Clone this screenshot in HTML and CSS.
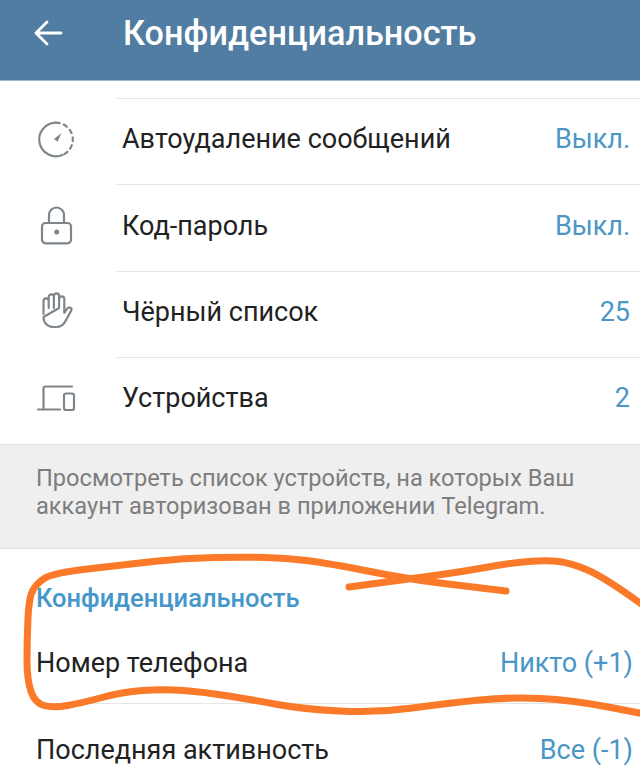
FILE: index.html
```html
<!DOCTYPE html>
<html lang="ru">
<head>
<meta charset="utf-8">
<title>Конфиденциальность</title>
<link rel="stylesheet" href="styles.css">
</head>
<body>
<div class="page">
  <header class="bar">
    <svg class="back" viewBox="0 0 30 28" width="30" height="28"><path d="M28 14H3M14 3 3 14l11 11" fill="none" stroke="#fff" stroke-width="2.800" stroke-linecap="round" stroke-linejoin="round"/></svg>
    <h1 class="title">Конфиденциальность</h1>
  </header>
  <section class="list">
    <div class="row">
      <svg class="icon" viewBox="0 0 40 40" width="40" height="40"><g fill="none" stroke="#7f868b" stroke-width="2.200" stroke-linecap="round"><path d="M19 1.700A16.800 16.800 0 1 0 25.500 34"/><path d="M19 1.700a16.800 16.800 0 0 1 16.800 16.800 16.800 16.800 0 0 1-10.300 15.500" stroke-dasharray="3.800 4.200"/></g><path d="M24.500 12 20.500 20.800 17 18Z" fill="#7f868b"/></svg>
      <div class="cell"><span class="label">Автоудаление сообщений</span><span class="value">Выкл.</span></div>
    </div>
    <div class="row">
      <svg class="icon" viewBox="0 0 40 40" width="40" height="40"><g fill="none" stroke="#7f868b" stroke-width="2.200"><rect x="5" y="15" width="29" height="20.300" rx="3.500"/><path d="M12 15V7a7.500 7.500 0 0 1 15 0v8"/></g><circle cx="19.700" cy="24" r="2.500" fill="#7f868b"/></svg>
      <div class="cell"><span class="label">Код-пароль</span><span class="value">Выкл.</span></div>
    </div>
    <div class="row">
      <svg class="icon" viewBox="0 0 40 40" width="40" height="40"><path transform="translate(-1.500 -4)" d="M8 24V11a2.600 2.600 0 0 1 5.200 0v7M13.200 18V7a2.600 2.600 0 0 1 5.200 0v11M18.400 18V6a2.600 2.600 0 0 1 5.200 0v12M23.600 18V9a2.600 2.600 0 0 1 5.200 0v14l3-4.500c1.800-2.300 5.200-.4 3.800 2.200L30 31c-2 4-5 6-9 6h-3c-6 0-10-4-10-10z" fill="none" stroke="#7f868b" stroke-width="2.200" stroke-linecap="round" stroke-linejoin="round"/></svg>
      <div class="cell"><span class="label">Чёрный список</span><span class="value">25</span></div>
    </div>
    <div class="row">
      <svg class="icon" viewBox="0 0 40 40" width="40" height="40"><g fill="none" stroke="#7f868b" stroke-width="2.200" stroke-linecap="round" stroke-linejoin="round"><path d="M35 6.500H8.500a2 2 0 0 0-2 2V29"/><path d="M1 29.500H23"/><rect x="27" y="13.500" width="10" height="16.500" rx="2"/></g></svg>
      <div class="cell"><span class="label">Устройства</span><span class="value">2</span></div>
    </div>
  </section>
  <p class="hint">Просмотреть список устройств, на которых Ваш аккаунт авторизован в приложении Telegram.</p>
  <section class="privacy">
    <h2 class="section-title">Конфиденциальность</h2>
    <div class="plain-row plain-first"><span class="label">Номер телефона</span><span class="value">Никто (+1)</span></div>
    <div class="plain-row plain-second"><span class="label">Последняя активность</span><span class="value">Все (-1)</span></div>
  </section>
  <svg class="scribble" viewBox="0 0 640 779" width="640" height="779"><g fill="none" stroke="#fb7a2a" stroke-width="7" stroke-linecap="round" stroke-linejoin="round"><path d="M646 607L640 603Q604 577 587.500 570Q571 563 559 561.500Q547 560 528.500 561.500Q510 563 485.500 567.500Q461 572 434.500 575.500Q408 579 349 587"/><path d="M506 591L440 583Q408 579 367.500 571Q327 563 306.500 560.500Q286 558 265.500 557.500Q245 557 214.500 557.500Q184 558 153 561.500Q122 565 87.500 569Q53 573 45 578Q37 583 33 590Q29 597 28 618Q27 640 27 660Q27 680 31 691.500Q35 703 44 705.500Q53 708 67.500 705.500Q82 703 102 697.500Q122 692 142.500 690.500Q163 689 183.500 690.500Q204 692 228.500 696Q253 700 277.500 704.500Q302 709 339 711Q376 713 412.500 708Q449 703 479.500 700Q510 697 540.500 698.500Q571 700 605.500 706.500Q640 713 650 715"/></g></svg>
</div>
</body>
</html>
```

FILE: styles.css
```css
* { box-sizing: border-box; margin: 0; padding: 0; }
html, body { background: #fff; }
body { font-family: Roboto, "Noto Sans", sans-serif; overflow: hidden; }
.page { position: relative; width: 640px; height: 779px; overflow: hidden; background: #fff; }
.bar { height: 81px; background: #517da2; border-bottom: 1px solid #9dbad2; display: flex; align-items: center; padding: 0 0 14px 33px; gap: 60px; }
.back { flex: none; }
.title { color: #fff; font-size: 34.200px; font-weight: 500; line-height: 40px; }
.list { padding-top: 17px; }
.row { height: 86.400px; display: flex; align-items: center; padding-left: 37px; }
.icon { flex: none; margin-right: 39px; width: 40px; height: 40px; overflow: visible; }
.cell { flex: 1; height: 100%; display: flex; align-items: center; justify-content: space-between; border-top: 1px solid #e6e6e6; padding: 0 10px 5px 6px; }
.label { color: #222; font-size: 27px; line-height: 32px; }
.value { color: #4a96c6; font-size: 27px; line-height: 32px; }
.hint { height: 105px; background: #efefef; border-top: 1px solid #e2e2e2; border-bottom: 1px solid #e2e2e2; padding: 19px 36px 0; color: #7d7d7d; font-size: 23.600px; line-height: 28px; }
.privacy { padding: 34px 0 0 36px; }
.section-title { color: #4596ca; font-size: 25.500px; font-weight: 500; line-height: 30px; }
.plain-row { display: flex; align-items: center; justify-content: space-between; }
.plain-first { height: 91px; padding: 11px 7px 0 0; border-bottom: 1px solid #e6e6e6; }
.plain-second { height: 86px; padding: 6px 7px 0 0; }
.scribble { position: absolute; left: 0; top: 0; pointer-events: none; }
```
